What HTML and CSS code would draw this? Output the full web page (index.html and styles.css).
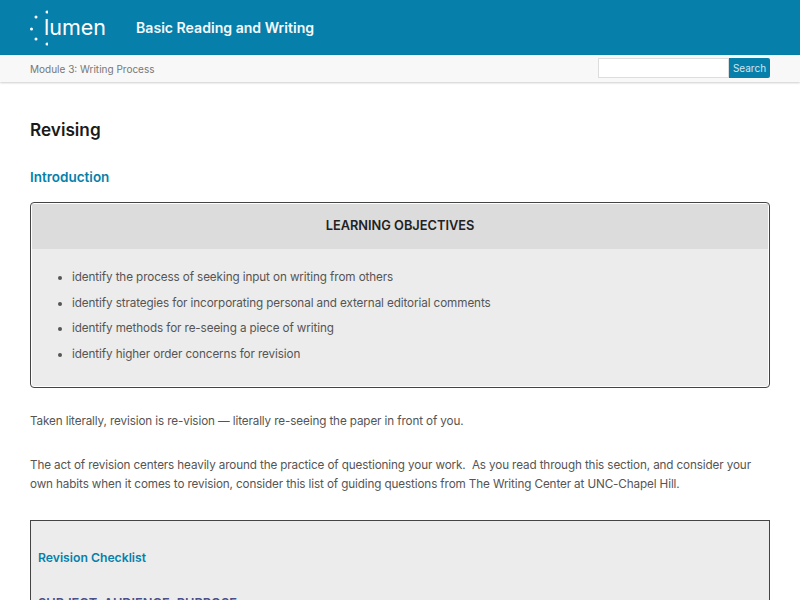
FILE: index.html
```html
<!DOCTYPE html>
<html lang="en">
<head>
<meta charset="utf-8">
<title>Revising</title>
<link rel="stylesheet" href="styles.css">
</head>
<body>
<header class="topbar">
  <div class="logo">
    <svg class="logo-dots" width="18" height="36" viewBox="0 0 18 36" aria-hidden="true">
      <g fill="#fff">
        <circle cx="17" cy="2" r="1.5"/>
        <circle cx="6" cy="7" r="1.5"/>
        <circle cx="1.5" cy="19" r="1.5"/>
        <circle cx="6" cy="29" r="1.5"/>
        <circle cx="17" cy="34" r="1.5"/>
      </g>
    </svg>
    <span class="logo-text">lumen</span>
  </div>
  <div class="course-title">Basic Reading and Writing</div>
</header>
<nav class="subbar">
  <span class="crumb">Module 3: Writing Process</span>
  <form class="search">
    <input class="search-input" type="text" aria-label="Search">
    <button class="search-btn" type="button">Search</button>
  </form>
</nav>
<main class="content">
  <h1 class="page-title">Revising</h1>
  <h2 class="section-title">Introduction</h2>
  <section class="objectives">
    <h3 class="objectives-head">LEARNING OBJECTIVES</h3>
    <ul class="objectives-list">
      <li>identify the process of seeking input on writing from others</li>
      <li>identify strategies for incorporating personal and external editorial comments</li>
      <li>identify methods for re-seeing a piece of writing</li>
      <li>identify higher order concerns for revision</li>
    </ul>
  </section>
  <p class="para">Taken literally, revision is re-vision — literally re-seeing the paper in front of you.</p>
  <p class="para">The act of revision centers heavily around the practice of questioning your work.&nbsp; As you read through this section, and consider your own habits when it comes to revision, consider this list of guiding questions from The Writing Center at UNC-Chapel Hill.</p>
  <section class="checklist">
    <h2 class="checklist-title">Revision Checklist</h2>
    <h3 class="checklist-sub">SUBJECT, AUDIENCE, PURPOSE</h3>
  </section>
</main>
</body>
</html>
```
FILE: styles.css
```css
html, body {
  margin: 0;
  padding: 0;
  height: 600px;
  overflow: hidden;
  background: #fff;
}
body {
  font-family: "Inter", "Open Sans", sans-serif;
  color: #555;
  font-size: 11.7px;
  letter-spacing: -0.1px;
}
.topbar {
  height: 55px;
  background: #077fab;
  display: flex;
  align-items: center;
  padding-left: 30px;
  box-sizing: border-box;
}
.logo {
  display: flex;
  align-items: center;
  width: 106px;
  height: 55px;
}
.logo-dots {
  margin-right: -4px;
  flex: none;
}
.logo-text {
  color: #fff;
  font-family: "Inter", sans-serif;
  font-weight: 400;
  font-size: 21.5px;
  letter-spacing: 0;
  line-height: 1;
}
.course-title {
  color: #f4f9fb;
  font-family: "Inter", sans-serif;
  font-weight: 600;
  font-size: 14.1px;
  letter-spacing: 0;
  margin-top: -1px;
}
.subbar {
  height: 27px;
  background: #f8f8f8;
  box-shadow: 0 1px 2px rgba(0, 0, 0, .2);
  display: flex;
  align-items: flex-start;
  justify-content: space-between;
  padding: 3px 30px 0;
  box-sizing: border-box;
}
.crumb {
  color: #777;
  font-size: 10px;
  letter-spacing: 0;
  line-height: 22px;
}
.search {
  display: flex;
}
.search-input {
  width: 131px;
  height: 20px;
  box-sizing: border-box;
  border: 1px solid #ddd;
  background: #fff;
  padding: 0;
  margin: 0;
}
.search-btn {
  width: 41px;
  height: 20px;
  background: #077fab;
  color: #cfe6ef;
  border: 0;
  border-radius: 0 2px 2px 0;
  font-family: "Inter", sans-serif;
  font-size: 10px;
  padding: 0;
}
.content {
  padding: 0 30px;
}
.page-title {
  margin: 37px 0 0;
  font-family: "Inter", sans-serif;
  font-size: 17.2px;
  line-height: 22px;
  font-weight: 600;
  letter-spacing: 0;
  color: #1a1a1a;
}
.section-title {
  margin: 26px 0 0;
  font-family: "Inter", sans-serif;
  font-size: 13.5px;
  line-height: 20px;
  font-weight: 600;
  letter-spacing: 0;
  color: #077fab;
}
.objectives {
  margin: 15px 0 24px;
  height: 186px;
  box-sizing: border-box;
  border: 1px solid #444;
  border-radius: 4px;
  background: #ececec;
  box-shadow: inset 0 0 0 1px #fff;
  padding: 1px;
}
.objectives-head {
  margin: 0;
  height: 45px;
  line-height: 44px;
  background: #dcdcdc;
  text-align: center;
  font-family: "Inter", sans-serif;
  font-size: 12.8px;
  font-weight: 600;
  letter-spacing: 0;
  color: #222;
}
.objectives-list {
  margin: 16px 0 0;
  padding: 0 0 0 40px;
  list-style: disc;
}
.objectives-list li {
  line-height: 25.7px;
}
.para {
  margin: 0 0 25px;
  line-height: 19px;
  letter-spacing: -0.12px;
}
.checklist {
  margin-top: 26px;
  border: 1px solid #444;
  background: #ececec;
  padding: 27px 7px 0;
  height: 200px;
}
.checklist-title {
  margin: 0;
  font-family: "Inter", sans-serif;
  font-size: 12.2px;
  line-height: 20px;
  font-weight: 600;
  letter-spacing: 0;
  color: #077fab;
}
.checklist-sub {
  margin: 26px 0 0;
  font-family: "Inter", sans-serif;
  font-size: 12.8px;
  line-height: 20px;
  font-weight: 600;
  letter-spacing: 0;
  color: #4b4f8a;
}
```
